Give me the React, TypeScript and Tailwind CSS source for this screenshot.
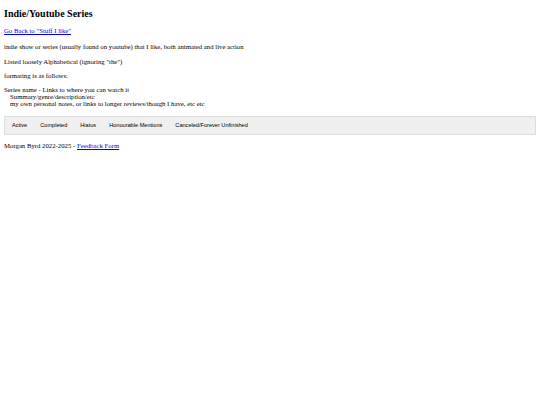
const tabs = ["Active", "Completed", "Hiatus", "Honourable Mentions", "Canceled/Forever Unfinished"];

export default function App() {
  return (
    <div className="min-h-[405px] bg-white px-[4px] pt-[8px] font-['Liberation_Serif',serif] text-[6.75px] leading-[7px] text-black">
      <h2 className="text-[10px] leading-[12px] font-bold">Indie/Youtube Series</h2>
      <p className="mt-[7px]">
        <a href="#" className="text-[#0000ee] underline">Go Back to "Stuff I like"</a>
      </p>
      <p className="mt-[9px]">indie show or series (usually found on youtube) that I like, both animated and live action</p>
      <p className="mt-[8px]">Listed loosely Alphabetical (ignoring "the")</p>
      <p className="mt-[7px]">formating is as follows:</p>
      <div className="mt-[7px]">
        <div>Series name - Links to where you can watch it</div>
        <div className="pl-[6px]">Summary/genre/description/etc</div>
        <div className="pl-[6px]">my own personal notes, or links to longer reviews/though I have, etc etc</div>
      </div>
      <nav className="mt-[9px] flex h-[19px] items-center gap-[13px] border border-[#dcdcdc] bg-[#f0f0f0] px-[7px] font-['Liberation_Sans',sans-serif] text-[5.6px]">
        {tabs.map((t) => (
          <span key={t}>{t}</span>
        ))}
      </nav>
      <p className="mt-[7px]">
        Morgan Byrd 2022-2025 - <a href="#" className="text-[#0000ee] underline">Feedback Form</a>
      </p>
    </div>
  );
}
